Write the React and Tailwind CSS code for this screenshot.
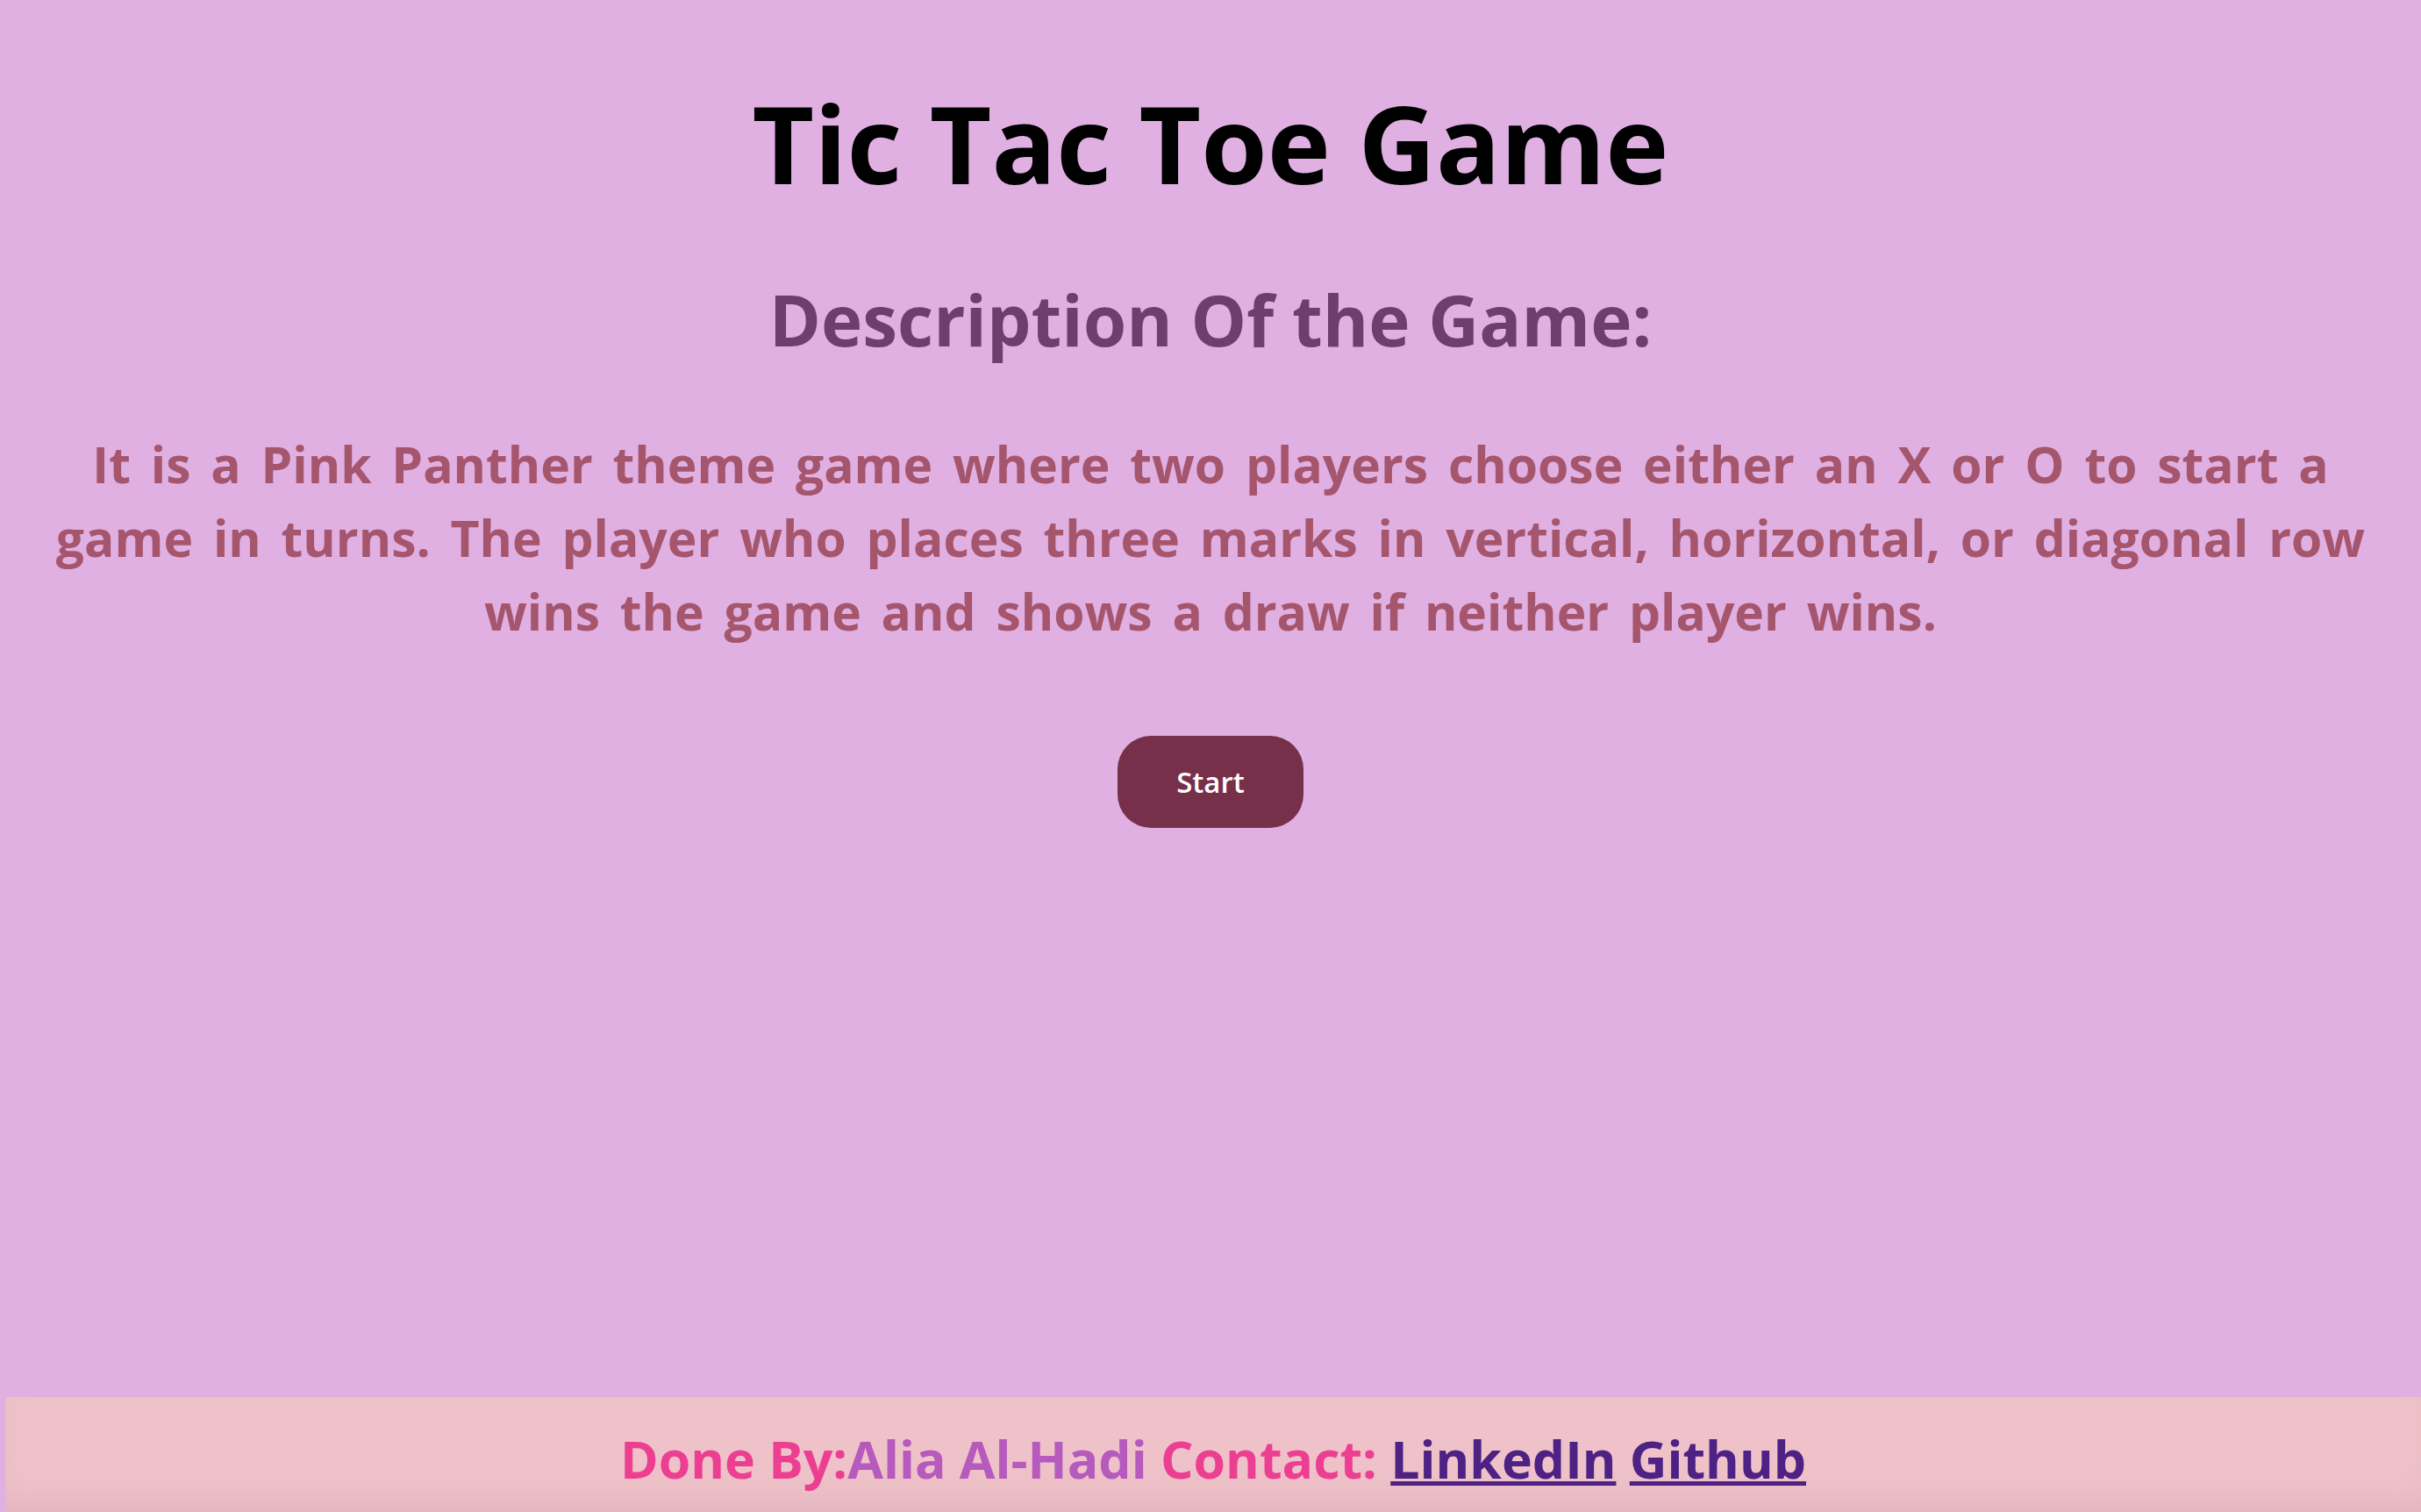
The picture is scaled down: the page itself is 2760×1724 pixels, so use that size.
import React from "react";

export default function App() {
  return (
    <div className="min-h-screen flex flex-col bg-[#e0b0e2] font-['Comic_Sans_MS','Open_Sans',sans-serif]">
      <main className="flex flex-col items-center px-[48px]">
        <h1 className="mt-[88px] text-[122px] leading-[150px] font-bold text-black">
          Tic Tac Toe Game
        </h1>
        <h2 className="mt-[71px] text-[80px] leading-[110px] font-bold text-[#6d3f6e]">
          Description Of the Game:
        </h2>
        <p className="mt-[68px] text-center text-[57px] leading-[84px] font-bold text-[#a5566d] [word-spacing:8px]">
          It is a Pink Panther theme game where two players choose either an X or O to start a
          game in turns. The player who places three marks in vertical, horizontal, or diagonal row
          wins the game and shows a draw if neither player wins.
        </p>
        <button className="mt-[100px] w-[212px] h-[105px] rounded-[38px] bg-[#76304a] text-white text-[33px] font-semibold">
          Start
        </button>
      </main>
      <footer className="mt-auto ml-[6px] h-[131px] bg-[#efc2c9] shadow-[inset_0_-30px_40px_-20px_rgba(200,150,170,0.35)] flex justify-center items-end pb-[26px]">
        <p className="text-[59px] leading-[70px] font-bold">
          <span className="text-[#ec3f92]">Done By:</span>
          <span className="text-[#b65abd]">Alia Al-Hadi</span>{" "}
          <span className="text-[#ec3f92]">Contact:</span>{" "}
          <a href="#" className="text-[#4e2184] underline">LinkedIn</a>{" "}
          <a href="#" className="text-[#4e2184] underline">Github</a>
        </p>
      </footer>
    </div>
  );
}
